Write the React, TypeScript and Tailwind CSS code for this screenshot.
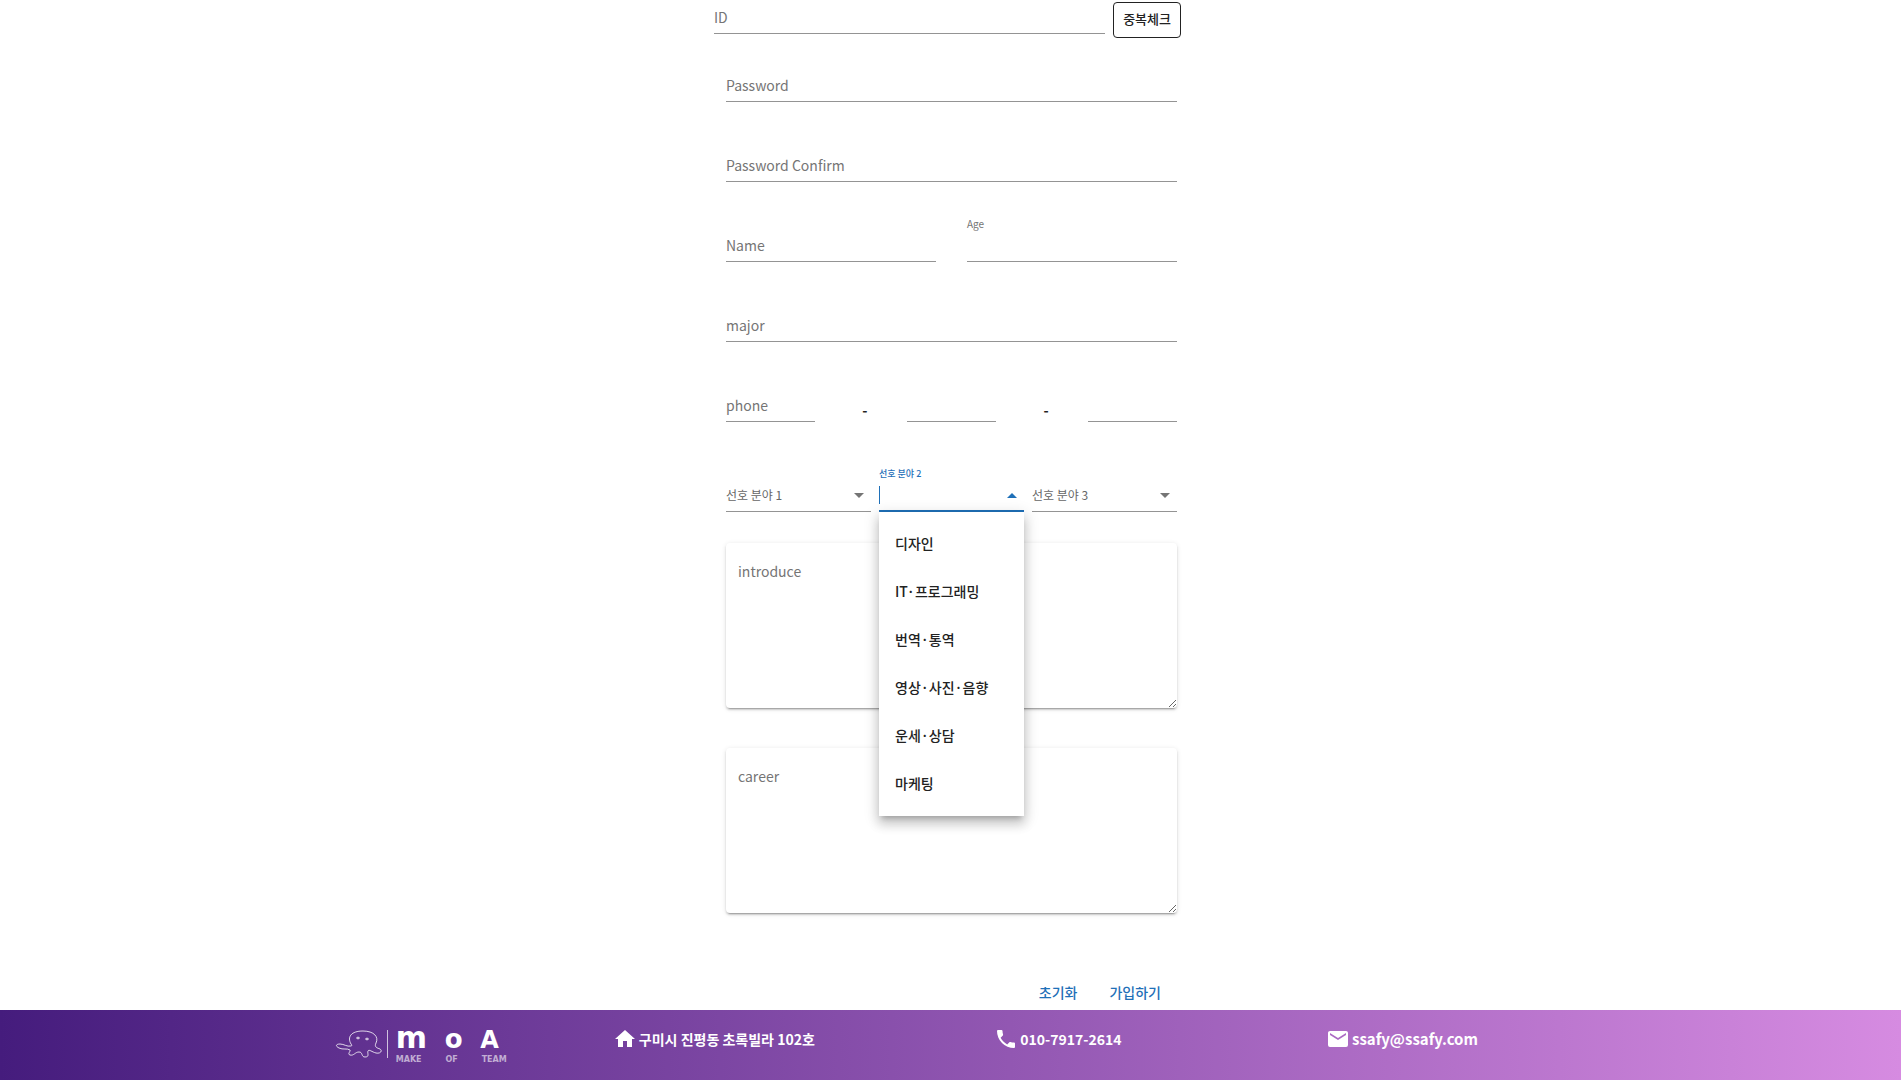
import { ReactNode, useState } from "react";

const FIELD =
  "block h-8 w-full min-w-0 appearance-none rounded-none border-b border-[#949494] bg-transparent pb-0.5 text-sm text-[#222] outline-none placeholder:text-[#757575] placeholder:opacity-100";

const FIELDS_OF_WORK = [
  "디자인",
  "IT·프로그래밍",
  "번역·통역",
  "영상·사진·음향",
  "운세·상담",
  "마케팅",
];

function Field({ label, type = "text" }: { label: string; type?: string }) {
  return <input type={type} aria-label={label} placeholder={label} className={FIELD} />;
}

function Arrow({ up = false }: { up?: boolean }) {
  return (
    <svg
      viewBox="0 0 24 24"
      aria-hidden="true"
      className="pointer-events-none absolute right-0 top-1 h-6 w-6"
      fill="currentColor"
    >
      <path d={up ? "M7,14L12,9L17,14H7Z" : "M7,9L12,14L17,9H7Z"} />
    </svg>
  );
}

function Preference({ label }: { label: string }) {
  return (
    <div className="relative text-[#757575]">
      <select
        aria-label={label}
        defaultValue=""
        className="block h-8 w-full appearance-none rounded-none border-b border-[#949494] bg-transparent pb-0.5 pr-6 text-xs text-[#666] outline-none"
      >
        <option value="">{label}</option>
        {FIELDS_OF_WORK.map((name) => (
          <option key={name}>{name}</option>
        ))}
      </select>
      <Arrow />
    </div>
  );
}

function OpenPreference({ label }: { label: string }) {
  const [value, setValue] = useState("");
  return (
    <div className="relative text-[#1f70b8]">
      <label htmlFor="preference-open" className="absolute -top-3 left-0 text-[9px] font-medium leading-3">
        {label}
      </label>
      <input
        id="preference-open"
        role="combobox"
        aria-expanded="true"
        aria-controls="preference-list"
        readOnly
        value={value}
        className="block h-8 w-full border-b-2 border-[#1f70b8] bg-transparent text-sm outline-none"
      />
      <span className="pointer-events-none absolute left-0 top-1.5 h-[18px] w-px bg-[#1f70b8]" />
      <Arrow up />
      <ul
        id="preference-list"
        role="listbox"
        className="absolute left-0 top-full z-10 w-full bg-white py-2 text-sm text-[#222] shadow-[0_5px_5px_-3px_rgba(0,0,0,0.2),0_8px_10px_1px_rgba(0,0,0,0.14),0_3px_14px_2px_rgba(0,0,0,0.12)]"
      >
        {FIELDS_OF_WORK.map((name) => (
          <li key={name} role="option" aria-selected={name === value}>
            <button
              type="button"
              onClick={() => setValue(name)}
              className="flex h-12 w-full items-center whitespace-nowrap px-4 pb-0.5 font-medium"
            >
              {name}
            </button>
          </li>
        ))}
      </ul>
    </div>
  );
}

function Area({ label }: { label: string }) {
  return (
    <textarea
      aria-label={label}
      placeholder={label}
      className="block h-[165px] w-full resize-y rounded bg-white px-3 pt-[18px] text-sm text-[#222] shadow-[0_3px_1px_-2px_rgba(0,0,0,0.2),0_2px_2px_0_rgba(0,0,0,0.14),0_1px_5px_0_rgba(0,0,0,0.12)] outline-none placeholder:text-[#757575] placeholder:opacity-100"
    />
  );
}

function Contact({ path, children }: { path: string; children: ReactNode }) {
  return (
    <div className="flex h-6 items-center justify-center gap-0.5 whitespace-nowrap">
      <svg viewBox="0 0 24 24" className="h-6 w-6 shrink-0" fill="currentColor" aria-hidden="true">
        <path d={path} />
      </svg>
      {children}
    </div>
  );
}

function Logo() {
  return (
    <div className="-mt-1 flex w-[172px] items-center text-white">
      <svg
        viewBox="0 0 48 30"
        className="h-[30px] w-12 shrink-0"
        fill="none"
        stroke="currentColor"
        strokeOpacity="0.8"
        aria-hidden="true"
      >
        <path d="M16 15C12 8 16 2 28 2C39 2 44 8 41 14C39 18 42 19 45 20C48 22 45 25 41 24C37 23 34 20 33 22C32 24 35 28 30 28C26 28 28 23 24 23C20 23 19 27 15 26C12 25 16 22 15 21C12 19 8 21 4 19C0 17 1 15 5 15C9 15 12 18 16 17C17 17 17 16 16 15Z" />
        <ellipse cx="23" cy="9" rx="1.5" ry="0.8" />
        <ellipse cx="32" cy="10" rx="1.5" ry="0.8" />
      </svg>
      <span className="ml-1 h-7 w-px bg-white/70" />
      <div className="flex flex-1 flex-col pl-2 font-['DejaVu_Sans']">
        <div className="flex h-[30px] items-baseline justify-between pr-2 font-bold">
          <span className="text-[30px] leading-none">m</span>
          <span className="text-[26px] leading-none">o</span>
          <span className="text-2xl leading-none">A</span>
        </div>
        <div className="mt-0.5 flex justify-between text-[8px] font-bold leading-[10px] text-white/60">
          <span>MAKE</span>
          <span>OF</span>
          <span>TEAM</span>
        </div>
      </div>
    </div>
  );
}

const HOME = "M10,20V14H14V20H19V12H22L12,3L2,12H5V20H10Z";
const PHONE =
  "M6.62,10.79C8.06,13.62 10.38,15.94 13.21,17.38L15.41,15.18C15.69,14.9 16.08,14.82 16.43,14.93C17.55,15.3 18.75,15.5 20,15.5A1,1 0 0,1 21,16.5V20A1,1 0 0,1 20,21A17,17 0 0,1 3,4A1,1 0 0,1 4,3H7.5A1,1 0 0,1 8.5,4C8.5,5.25 8.7,6.45 9.07,7.57C9.18,7.92 9.1,8.31 8.82,8.59L6.62,10.79Z";
const MAIL =
  "M20,8L12,13L4,8V6L12,11L20,6M20,4H4C2.89,4 2,4.89 2,6V18A2,2 0 0,0 4,20H20A2,2 0 0,0 22,18V6C22,4.89 21.1,4 20,4Z";

export default function App() {
  return (
    <div className="flex min-h-screen flex-col bg-white font-['Noto_Sans_CJK_KR',sans-serif] text-[#222]">
      <main className="flex-1 pl-0.5 pt-0.5">
        <form className="mx-auto w-full max-w-[451px]">
          <div className="-ml-3 -mr-1 mb-8 flex items-start gap-2">
            <Field label="ID" />
            <button
              type="button"
              className="h-9 shrink-0 whitespace-nowrap rounded border border-[#222] px-[9px] pb-0.5 text-[13px] font-medium"
            >
              중복체크
            </button>
          </div>

          <div className="flex flex-col gap-12">
            <Field label="Password" type="password" />
            <Field label="Password Confirm" type="password" />
            <div className="grid grid-cols-2 gap-[31px]">
              <Field label="Name" />
              <div className="relative">
                <label htmlFor="age" className="absolute -top-3 left-0 text-[10px] leading-3 text-[#757575]">
                  Age
                </label>
                <input id="age" type="text" inputMode="numeric" className={FIELD} />
              </div>
            </div>
            <Field label="major" />
            <div className="grid grid-cols-5 items-center gap-0.5">
              <Field label="phone" />
              <span className="pl-2 pt-2 text-center text-sm font-bold">-</span>
              <input type="tel" aria-label="phone middle digits" className={FIELD} />
              <span className="pl-2 pt-2 text-center text-sm font-bold">-</span>
              <input type="tel" aria-label="phone last digits" className={FIELD} />
            </div>
          </div>

          <div className="mt-[58px] grid grid-cols-3 gap-2">
            <Preference label="선호 분야 1" />
            <OpenPreference label="선호 분야 2" />
            <Preference label="선호 분야 3" />
          </div>

          <div className="mt-[31px] flex flex-col gap-10">
            <Area label="introduce" />
            <Area label="career" />
          </div>

          <div className="mt-[61px] flex justify-end text-sm font-medium text-[#1f70b8]">
            <button type="button" className="h-9 px-4">초기화</button>
            <button type="button" className="h-9 px-4">가입하기</button>
          </div>
        </form>
      </main>

      <footer className="grid h-[70px] grid-cols-4 items-start bg-[linear-gradient(to_right,#451c7d,#d68be1)] pl-[10.4%] pr-[17.2%] pt-[17px] font-bold text-white">
        <div className="flex justify-center pl-[102px]">
          <Logo />
        </div>
        <Contact path={HOME}>
          <span className="text-sm">구미시 진평동 초록빌라 102호</span>
        </Contact>
        <Contact path={PHONE}>
          <span className="text-sm">010-7917-2614</span>
        </Contact>
        <Contact path={MAIL}>
          <a href="mailto:ssafy@ssafy.com" className="text-[15px]">ssafy@ssafy.com</a>
        </Contact>
      </footer>
    </div>
  );
}
